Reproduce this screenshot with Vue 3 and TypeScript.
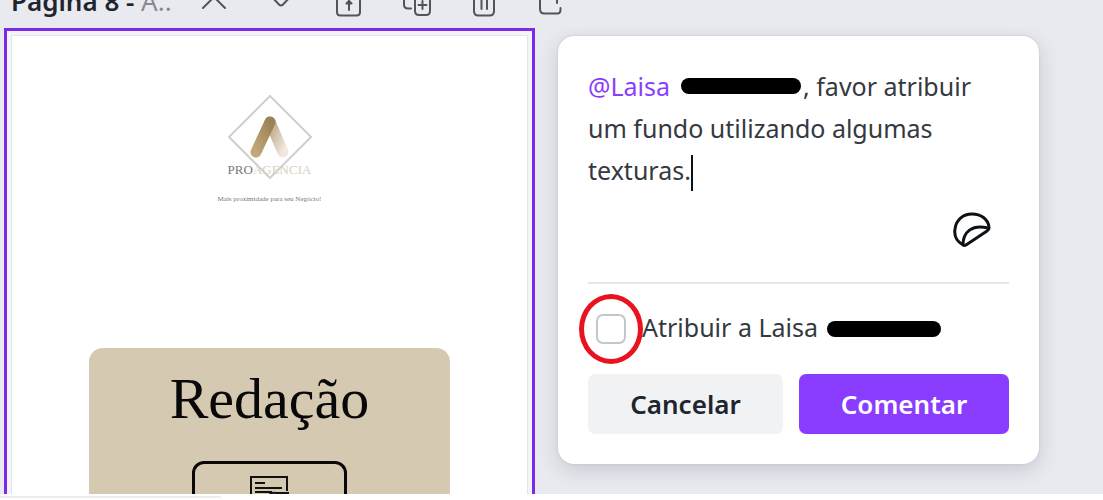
<script setup lang="ts">
import { ref } from 'vue'

const assign = ref(false)

const tools: { label: string; paths: string[] }[] = [
  { label: 'Mover para cima', paths: ['M5 20 16 9l11 11'] },
  { label: 'Mover para baixo', paths: ['M5 7l9 9.500q2 2 4 0l9-9.500'] },
  { label: 'Bloquear', paths: ['M5 6v18q0 3.500 3.500 3.500h16q3.500 0 3.500-3.500V6', 'M17 22v-9', 'M14.500 15.500 17 13l2.500 2.500z'] },
  { label: 'Duplicar', paths: ['M16 4v19q0 4 4 4h7q4 0 4-4V4', 'M19.500 17h8M23.500 13v8', 'M5 4v12.500q0 4 4 4h3'] },
  { label: 'Excluir', paths: ['M8 4v19q0 4.500 4.500 4.500h11q4.500 0 4.500-4.500V4', 'M15.500 10v11M21 10v11'] },
  { label: 'Adicionar', paths: ['M7 4v17q0 4.500 4.500 4.500h13q3 0 3-4v-1.500', 'M24 12v3'] },
]
</script>

<template>
  <main class="app">
    <header class="toolbar">
      <h1 class="title">Página 8 - <span class="subtitle">A..</span></h1>
      <div class="tools">
        <button v-for="tool in tools" :key="tool.label" type="button" class="tool" :aria-label="tool.label">
          <svg viewBox="0 0 32 32" aria-hidden="true">
            <path v-for="d in tool.paths" :key="d" :d="d" />
          </svg>
        </button>
      </div>
    </header>

    <div class="workspace">
      <section class="frame">
        <div class="sheet">
          <div class="brand">
            <svg class="mark" viewBox="0 0 84 84" aria-hidden="true">
              <defs>
                <linearGradient id="legDark" x1="0" y1="1" x2="1" y2="0">
                  <stop offset="0" stop-color="#c2a878" />
                  <stop offset="1" stop-color="#9c8154" />
                </linearGradient>
                <linearGradient id="legLight" x1="0" y1="0" x2="1" y2="1">
                  <stop offset="0" stop-color="#b9a27c" />
                  <stop offset="1" stop-color="#f1e8df" />
                </linearGradient>
              </defs>
              <path d="M42 1 83 42 42 83 1 42Z" fill="none" stroke="#cfcfcf" stroke-width="2" />
              <path d="M42 27 55 57" stroke="url(#legLight)" stroke-width="11" stroke-linecap="round" />
              <path d="M42 27 28 57" stroke="url(#legDark)" stroke-width="11" stroke-linecap="round" />
            </svg>
            <p class="name">PRO<span>AGENCIA</span></p>
            <p class="tagline">Mais proximidade para seu Negócio!</p>
          </div>
          <article class="card">
            <h2>Redação</h2>
            <div class="picture">
              <svg viewBox="0 0 44 44" aria-hidden="true">
                <path d="M3 44V2h36v14" fill="none" stroke="#111" stroke-width="2" />
                <path d="M7 8h10M7 13h27M7 17h17" stroke="#111" stroke-width="2" />
                <path d="M20 21q3-4 8-3h12v4" fill="none" stroke="#111" stroke-width="2" />
              </svg>
            </div>
          </article>
        </div>
      </section>

      <form class="panel" @submit.prevent>
        <div class="editor" role="textbox" aria-multiline="true" aria-label="Comentário" contenteditable="true" spellcheck="false"><span class="mention">@Laisa</span><span class="redacted wide"></span>, favor atribuir um fundo utilizando algumas texturas.<span class="caret"></span></div>
        <div class="extras">
          <button type="button" class="sticker" aria-label="Adicionar figurinha">
            <svg viewBox="0 0 38 36" aria-hidden="true">
              <path d="M10 33C3 29 1 23 2 17 3 8 10 2 19 2c9 0 16 5 17 13 .3 2-.5 3-2 4L13 33q-2 1-3 0Z" />
              <path d="M10 33C10 20 19 12 35 16" />
            </svg>
          </button>
        </div>
        <div class="assign">
          <span class="tick"><input id="assign" v-model="assign" type="checkbox" /></span>
          <label for="assign">Atribuir a Laisa<span class="redacted"></span></label>
        </div>
        <div class="actions">
          <button type="button" class="cancel">Cancelar</button>
          <button type="submit" class="submit">Comentar</button>
        </div>
      </form>
    </div>
    <footer class="status"></footer>
  </main>
</template>

<style>
body {
  margin: 0;
}
</style>

<style scoped>
.app {
  display: flex;
  flex-direction: column;
  height: 100vh;
  overflow: hidden;
  background: #e9eaef;
  color: #20252d;
  font-family: "Noto Sans", "Open Sans", sans-serif;
}

.app * {
  box-sizing: border-box;
}

button {
  border: 0;
  padding: 0;
  background: none;
  color: inherit;
  font: inherit;
}

.toolbar {
  display: flex;
  flex: none;
  align-items: flex-end;
  height: 28px;
  padding: 0 0 8px 11px;
  overflow: hidden;
}

.title {
  flex: none;
  width: 187px;
  margin: 0;
  font-size: 26px;
  line-height: 38px;
  font-weight: 600;
  white-space: nowrap;
}

.subtitle {
  color: #858990;
  font-weight: 400;
}

.tools {
  display: flex;
  gap: 35px;
}

.tool {
  width: 32px;
  height: 32px;
}

.tool svg {
  display: block;
  fill: none;
  stroke: #50545b;
  stroke-width: 2;
  stroke-linecap: round;
  stroke-linejoin: round;
}

.workspace {
  display: grid;
  flex: 1;
  grid-template-columns: minmax(0, 531fr) minmax(0, 481fr);
  gap: 23px;
  min-height: 0;
  padding: 0 64px 0 4px;
  overflow: hidden;
}

.frame {
  padding: 4px 4px 0;
  border: 3px solid #7d2ae8;
  border-bottom: 0;
  background: #f4f3f8;
  overflow: hidden;
}

.sheet {
  display: flex;
  flex-direction: column;
  align-items: center;
  gap: 143px;
  padding: 59px 0 0;
  border: 1px solid #e3e3ec;
  border-bottom: 0;
  background: #fff;
}

.brand {
  display: flex;
  flex-direction: column;
  align-items: center;
  font-family: "Liberation Serif", serif;
}

.mark {
  width: 84px;
  height: 84px;
  fill: none;
}

.name {
  margin: -18px 0 0;
  color: #77777a;
  font-size: 13px;
  line-height: 18px;
}

.name span {
  color: #dccfbd;
}

.tagline {
  margin: 14px 0 0;
  color: #77777a;
  font-size: 7px;
  line-height: 12px;
}

.card {
  display: flex;
  flex-direction: column;
  align-items: center;
  gap: 29px;
  width: 70%;
  padding: 18px 0 40px;
  border-radius: 14px;
  background: #d6c9b2;
}

.card h2 {
  margin: 0;
  color: #080808;
  font-family: "Liberation Serif", serif;
  font-size: 58px;
  line-height: 66px;
  font-weight: 400;
}

.picture {
  display: flex;
  justify-content: center;
  width: 43%;
  padding: 11px 0;
  border: 3px solid #080808;
  border-radius: 12px;
}

.picture svg {
  width: 44px;
  height: 44px;
}

.panel {
  align-self: start;
  margin-top: 8px;
  padding: 29px 30px 30px;
  border-radius: 16px;
  background: #fff;
  box-shadow: 0 0 2px #b9bdc8, 0 6px 20px rgba(64, 72, 96, 0.2);
}

.editor {
  color: #343941;
  font-size: 25px;
  line-height: 42px;
  font-weight: 400;
  outline: 0;
}

.mention {
  color: #8b3dff;
}

.redacted {
  display: inline-block;
  width: 114px;
  height: 16px;
  margin-left: 9px;
  border-radius: 8px;
  background: #000;
}

.redacted.wide {
  width: 120px;
  margin: 0 2px 2px 11px;
}

.caret {
  display: inline-block;
  width: 2px;
  height: 36px;
  margin: -8px 0;
  background: #0d1216;
  vertical-align: middle;
}

.extras {
  display: flex;
  justify-content: flex-end;
  padding: 21px 18px 34px;
  border-bottom: 2px solid #e4e5e8;
}

.sticker svg {
  display: block;
  width: 38px;
  height: 36px;
  fill: none;
  stroke: #0d1216;
  stroke-width: 3;
  stroke-linejoin: round;
}

.assign {
  display: flex;
  align-items: center;
  gap: 16px;
  height: 90px;
  padding-left: 8px;
  color: #343941;
  font-size: 25px;
  white-space: nowrap;
}

.assign label {
  padding-bottom: 4px;
}

.tick {
  position: relative;
  flex: none;
}

.tick::after {
  position: absolute;
  inset: -20px -17px;
  border: 5px solid #e8131f;
  border-radius: 50%;
  content: "";
  pointer-events: none;
}

.tick input {
  display: block;
  width: 30px;
  height: 30px;
  margin: 0;
  border: 2px solid #c3c7cc;
  border-radius: 7px;
  background: #fff;
  appearance: none;
}

.tick input:checked {
  background: #8b3dff;
}

.actions {
  display: grid;
  grid-template-columns: 195fr 210fr;
  gap: 16px;
}

.actions button {
  height: 60px;
  border-radius: 7px;
  font-size: 26px;
  font-weight: 600;
}

.actions .cancel {
  background: #f1f2f4;
}

.actions .submit {
  background: #8b3dff;
  color: #fff;
}

.status {
  flex: none;
  height: 6px;
  background: linear-gradient(#ececf1, #ececf1) 0 2px / 20% 2px no-repeat #fff;
}
</style>
